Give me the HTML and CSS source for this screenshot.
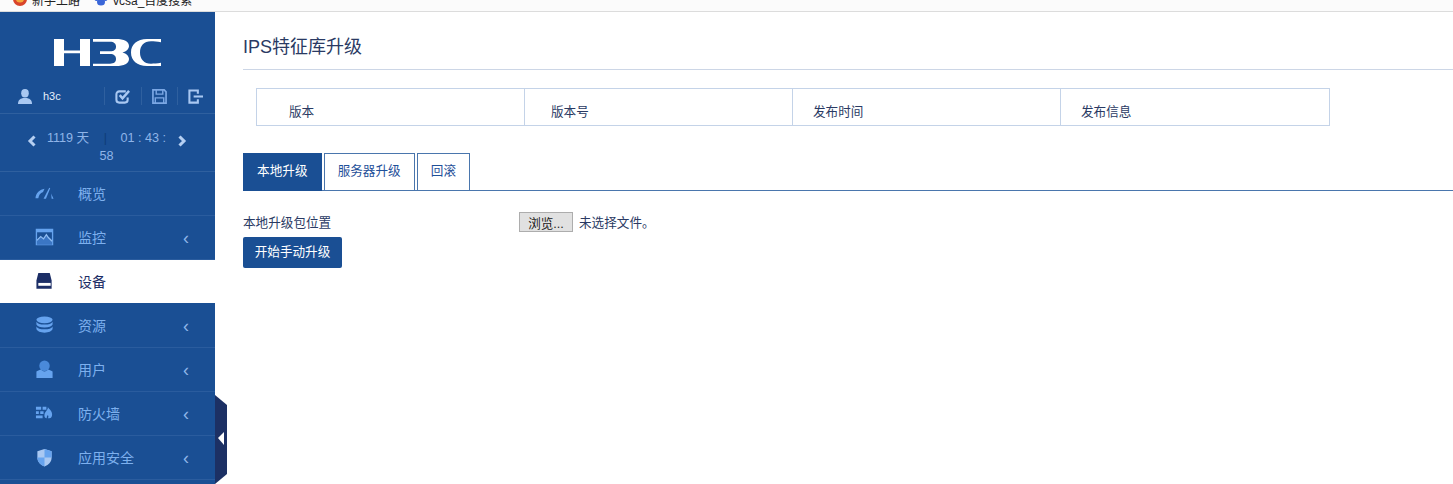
FILE: index.html
```html
<!DOCTYPE html>
<html lang="zh-CN">
<head>
<meta charset="utf-8">
<title>IPS特征库升级</title>
<link rel="stylesheet" href="styles.css">
</head>
<body>
<div class="bookmarks">
  <span class="bm">
    <svg class="bm-icon" viewBox="0 0 14 14"><circle cx="7" cy="7" r="7" fill="#d9452b"/><circle cx="7" cy="6" r="4.500" fill="#f4a83c"/><circle cx="7" cy="5" r="3" fill="#3a4fa8"/></svg>
    新手上路
  </span>
  <span class="bm bm-second">
    <svg class="bm-icon" viewBox="0 0 14 14"><circle cx="2.500" cy="7" r="2" fill="#3a66d8"/><circle cx="11.500" cy="7" r="2" fill="#3a66d8"/><circle cx="5" cy="3.500" r="1.800" fill="#3a66d8"/><circle cx="9" cy="3.500" r="1.800" fill="#3a66d8"/><ellipse cx="7" cy="10" rx="4" ry="3.500" fill="#3a66d8"/></svg>
    vcsa_百度搜索
  </span>
</div>
<div class="app">
  <aside class="sidebar">
    <div class="logo">
      <svg width="108" height="28" viewBox="0 0 108 28">
        <path fill="#fff" d="M0 0h10v11.500h16V0h10v27H26V14.200H10V27H0z"/>
        <path fill="#fff" d="M39 0h23c8 0 13 2.500 13 7 0 3-2.500 5.300-6.500 6.500C72.500 14.700 75 17 75 20c0 4.500-5 7-13 7H39v-2.300h17c4 0 6-1.800 6-4.700 0-3-2-5-6-5H46v-2.700h10c4 0 6-1.800 6-4.600 0-3-2-5-6-5H39z"/>
        <path fill="#fff" d="M107 0v3.200C103 2.600 100 2.300 97 2.300c-7 0-11 4.500-11 11.200s4 11.200 11 11.200c3 0 6-.3 10-.9V27H93C83 27 77 21.500 77 13.500S83 0 93 0z"/>
      </svg>
    </div>
    <div class="userbar">
      <svg class="ub-user" viewBox="0 0 14 15"><ellipse cx="7" cy="4.200" rx="3.800" ry="4.200" fill="#a9c8f2"/><path d="M0 15c0-3.500 1.500-5 5-6h4c3.500 1 5 2.500 5 6z" fill="#a9c8f2"/></svg>
      <span class="ub-name">h3c</span>
      <span class="ub-action"><svg viewBox="0 0 16 16"><path d="M13.500 9v2.500a3 3 0 0 1-3 3h-6a3 3 0 0 1-3-3v-6a3 3 0 0 1 3-3h7" fill="none" stroke="#a9c8f2" stroke-width="2.200"/><path d="M5 6.500l3 3.500 7-8" fill="none" stroke="#a9c8f2" stroke-width="2.600"/></svg></span>
      <span class="ub-action"><svg viewBox="0 0 16 16"><path d="M1 1h12l2 2v12H1z" fill="none" stroke="#7ba7e4" stroke-width="1.800"/><path d="M4.500 1v4.500h7V1M3.500 15V9.500h9V15" fill="none" stroke="#7ba7e4" stroke-width="1.500"/></svg></span>
      <span class="ub-action"><svg viewBox="0 0 16 16"><path d="M10.500 5V1.500H1.500v13h9V11" fill="none" stroke="#a9c8f2" stroke-width="2.200"/><path d="M6 8h10" stroke="#a9c8f2" stroke-width="2.200"/></svg></span>
    </div>
    <div class="timer">
      <svg class="chev" viewBox="0 0 10 12"><path d="M7.500 1.500L3 6l4.500 4.500" fill="none" stroke="#b5cff2" stroke-width="3"/></svg>
      <div class="timer-text">1119 天 <span class="timer-sep">|</span> &nbsp; 01 : 43 : 58</div>
      <svg class="chev" viewBox="0 0 10 12"><path d="M2.500 1.500L7 6l-4.500 4.500" fill="none" stroke="#b5cff2" stroke-width="3"/></svg>
    </div>
    <nav class="menu">
      <a class="item">
        <svg class="icon" viewBox="0 0 20 20"><path d="M.5 15C1 9 5 6 10 5l-1.500 3.500C5.500 9.500 4 12 3.500 15z" fill="#66a3ee"/><path d="M9 15.500L15 4l1 .5-4.500 11z" fill="#66a3ee"/><path d="M17 10l2.500 5.500h-2z" fill="#66a3ee"/></svg>
        <span class="label">概览</span>
      </a>
      <a class="item">
        <svg class="icon" viewBox="0 0 20 20"><path d="M1.500 1.500h17v16h-17z" fill="none" stroke="#66a3ee" stroke-width="1.400"/><path d="M1.500 1.500h17v3h-17z" fill="#66a3ee"/><path d="M2 13l4-4 3 2.500L12 7l3 3 3 3v4.500H2z" fill="#3b76c4"/><path d="M2 13l4-4 3 2.500L12 7l2 3 4 4" fill="none" stroke="#8fbcf2" stroke-width="1.300"/></svg>
        <span class="label">监控</span>
        <span class="caret">‹</span>
      </a>
      <a class="item active">
        <svg class="icon" viewBox="0 0 20 20"><path d="M3.500 1h12l2 8v8.500h-16V9z" fill="#1c2e66"/><path d="M3.500 11.500h13v3h-13z" fill="#fff"/></svg>
        <span class="label">设备</span>
      </a>
      <a class="item">
        <svg class="icon" viewBox="0 0 20 20"><ellipse cx="10" cy="4" rx="8.500" ry="3.500" fill="#66a3ee"/><path d="M1.500 6c1 2 4 3 8.500 3s7.500-1 8.500-3v3c-1 2-4 3-8.500 3s-7.500-1-8.500-3zM1.500 11c1 2 4 3 8.500 3s7.500-1 8.500-3v3c-1 2-4 3.500-8.500 3.500S2.500 16 1.500 14z" fill="#66a3ee"/></svg>
        <span class="label">资源</span>
        <span class="caret">‹</span>
      </a>
      <a class="item">
        <svg class="icon" viewBox="0 0 20 20"><circle cx="10" cy="6" r="5.500" fill="#4a8ada"/><path d="M1.500 12c2-1 3.500-1.500 5-2 1 1.500 2 2 3.500 2s2.500-.5 3.500-2c1.500.5 3 1 5 2v7h-17z" fill="#66a3ee"/></svg>
        <span class="label">用户</span>
        <span class="caret">‹</span>
      </a>
      <a class="item">
        <svg class="icon" viewBox="0 0 20 20"><path d="M1 3h5.500v3H1zM8 3h4v3H8zM1 7.500h3v3H1zM5.500 7.500h3.500v3H5.500zM1 12h7v3H1z" fill="#66a3ee"/><path d="M13.500 3c.5 2 4.500 4 4.500 8 0 2.500-1 4-3 4h-1.500c.8-1 .8-2.500 0-3.500-.7 1-1.500 2-1 3.500-2 0-3-1.500-2.500-4 .5-3 4-4.500 3.500-8z" fill="#66a3ee"/></svg>
        <span class="label">防火墙</span>
        <span class="caret">‹</span>
      </a>
      <a class="item">
        <svg class="icon" viewBox="0 0 20 20"><path d="M10 1l7.500 2.500V10c0 4.500-3 7.500-7.500 9.500-4.500-2-7.500-5-7.500-9.500V3.500z" fill="#a9c8f2"/><path d="M10 1v9h7.500V3.500zM10 10H2.500c0 4.500 3 7.500 7.500 9.500z" fill="#66a3ee"/></svg>
        <span class="label">应用安全</span>
        <span class="caret">‹</span>
      </a>
    </nav>
    <div class="collapse">
      <svg width="12" height="89" viewBox="0 0 12 89"><path d="M0 0l12 10v69L0 89z" fill="#1c3064"/><path d="M3 43l6-6v13z" fill="#fff"/></svg>
    </div>
  </aside>
  <main class="content">
    <h1 class="title">IPS特征库升级</h1>
    <table class="info">
      <tr>
        <td class="c1">版本</td>
        <td class="c2">版本号</td>
        <td class="c3">发布时间</td>
        <td class="c4">发布信息</td>
      </tr>
    </table>
    <div class="tabs">
      <a class="tab on">本地升级</a>
      <a class="tab">服务器升级</a>
      <a class="tab">回滚</a>
    </div>
    <div class="form-row">
      <label class="form-label">本地升级包位置</label>
      <button class="browse" type="button">浏览...</button>
      <span class="nofile">未选择文件。</span>
    </div>
    <button class="start" type="button">开始手动升级</button>
  </main>
</div>
</body>
</html>
```

FILE: styles.css
```css
html, body {
  margin: 0;
  height: 484px;
  overflow: hidden;
  background: #fff;
}
body {
  font-family: "Liberation Sans", "Noto Sans CJK SC", sans-serif;
  font-size: 12.6px;
  color: #2a3a63;
}
.bookmarks {
  height: 11px;
  border-bottom: 1px solid #dcdcdc;
  background: #fbfbfb;
  display: flex;
  align-items: flex-end;
  overflow: hidden;
  padding-left: 13px;
  font-size: 12px;
  color: #222;
}
.bm {
  display: flex;
  align-items: center;
  gap: 5px;
  height: 20px;
  flex: none;
  margin-bottom: 2px;
}
.bm-second {
  margin-left: 14px;
}
.bm-icon {
  width: 14px;
  height: 14px;
  flex: none;
}
.app {
  display: flex;
  height: 472px;
}
.sidebar {
  width: 215px;
  flex: none;
  background: #1a4f94;
  position: relative;
  display: flex;
  flex-direction: column;
}
.logo {
  flex: none;
  height: 70px;
  padding: 27px 0 0 54px;
  box-sizing: border-box;
}
.logo svg {
  display: block;
}
.userbar {
  flex: none;
  height: 32px;
  box-sizing: border-box;
  padding: 0 0 3px 18px;
  display: flex;
  align-items: center;
  border-bottom: 1px solid #2f609f;
}
.ub-user {
  width: 14px;
  height: 15px;
  flex: none;
}
.ub-name {
  color: #e6effb;
  font-size: 11px;
  margin-left: 11px;
  width: 61px;
  flex: none;
}
.ub-action {
  width: 36.500px;
  height: 18px;
  flex: none;
  display: flex;
  align-items: center;
  justify-content: center;
  border-left: 1px solid #2f609f;
  box-sizing: border-box;
}
.ub-action svg {
  width: 15px;
  height: 15px;
}
.timer {
  flex: none;
  height: 58px;
  box-sizing: border-box;
  border-bottom: 1px solid #2f609f;
  display: flex;
  justify-content: center;
  align-items: flex-start;
  padding: 15px 2px 0 0;
}
.chev {
  width: 10px;
  height: 12px;
  margin-top: 6px;
  flex: none;
}
.timer-text {
  width: 128px;
  margin: 0 6px;
  text-align: center;
  font-size: 12.6px;
  line-height: 18px;
  color: #8fb5e8;
}
.timer-sep {
  color: #0f3d78;
  margin: 0 3px 0 11px;
}
.menu {
  flex: none;
  display: flex;
  flex-direction: column;
}
.item {
  flex: none;
  height: 44px;
  box-sizing: border-box;
  border-bottom: 1px solid #2a5c9e;
  display: flex;
  align-items: center;
  padding-left: 35px;
  color: #7db0ee;
  font-size: 14px;
}
.item.active {
  background: #fff;
  color: #1c2e66;
  border-bottom-color: #fff;
  height: 43px;
  margin-bottom: 1px;
}
.icon {
  width: 19px;
  height: 19px;
  flex: none;
}
.label {
  margin-left: 24px;
  padding-bottom: 2px;
  flex: 1;
}
.item.active .label {
  padding-bottom: 0;
}
.caret {
  width: 26px;
  flex: none;
  margin-right: 6px;
  font-size: 18px;
  color: #8fb5e8;
  line-height: 16px;
  text-align: left;
}
.collapse {
  position: absolute;
  left: 215px;
  top: 383px;
  line-height: 0;
}
.content {
  flex: 1;
  min-width: 0;
  padding-left: 28px;
}
.title {
  margin: 0;
  height: 58px;
  box-sizing: border-box;
  border-bottom: 1px solid #ccd6e6;
  padding-top: 23px;
  font-size: 18px;
  font-weight: 400;
  line-height: 24px;
  color: #2a3a63;
}
.info {
  margin: 18px 0 0 13px;
  width: 1074px;
  height: 38px;
  border-collapse: collapse;
  table-layout: fixed;
}
.info td {
  box-sizing: border-box;
  border: 1px solid #c4d3e8;
  padding: 6px 0 0;
  vertical-align: middle;
}
.info td.c1 { width: 268px; padding-left: 32px; }
.info td.c2 { width: 268px; padding-left: 26px; }
.info td.c3 { width: 268px; padding-left: 20px; }
.info td.c4 { padding-left: 20px; }
.tabs {
  display: flex;
  gap: 2px;
  margin-top: 27px;
  height: 38px;
  box-sizing: border-box;
  border-bottom: 1px solid #4a76ad;
}
.tab {
  height: 38px;
  box-sizing: border-box;
  border: 1px solid #4a76ad;
  padding: 0 13.100px;
  line-height: 35px;
  color: #1f5099;
}
.tab.on {
  background: #1a4f94;
  border-color: #1a4f94;
  color: #fff;
}
.form-row {
  display: flex;
  align-items: center;
  height: 20px;
  margin-top: 21px;
}
.form-label {
  width: 276px;
  flex: none;
  padding-bottom: 1px;
}
.browse {
  width: 54px;
  height: 20px;
  padding: 0;
  font: inherit;
  color: #222;
  background: #e1e1e1;
  border: 1px solid #adadad;
  border-radius: 0;
}
.nofile {
  margin-left: 6px;
  padding-bottom: 1px;
}
.start {
  display: block;
  width: 99px;
  height: 31px;
  margin-top: 5px;
  padding: 0 0 5px;
  border: none;
  border-radius: 2px;
  background: #1a4f94;
  color: #fff;
  font: inherit;
}
```
